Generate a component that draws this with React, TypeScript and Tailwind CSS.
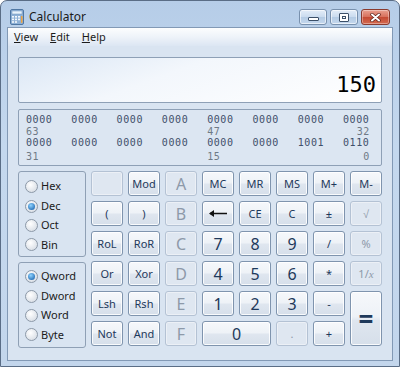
import React from "react";

const ui = "font-['Noto_Sans',sans-serif]";
const on =
  "border-[#7f94ae] bg-[linear-gradient(to_bottom,#f6f8fb_0%,#eef2f7_46%,#dfe6ef_54%,#d6dfea_100%)] text-[#1e395b] shadow-[inset_0_0_0_1px_rgba(255,255,255,0.85)]";
const off =
  "border-[#b4c2d4] bg-[#dfe7f1] text-[#8d99a9] shadow-[inset_0_0_0_1px_rgba(255,255,255,0.4)]";

type Key = { l: React.ReactNode; off?: boolean; size?: string; span?: string };

const Back = () => (
  <svg width="20" height="9" viewBox="0 0 20 9">
    <path d="M2 4.5 H19" stroke="#111" strokeWidth="1.6" />
    <path d="M1 4.5 L6 1 L6 8 Z" fill="#111" />
  </svg>
);

const keys: Key[] = [
  { l: "", off: true },
  { l: "Mod" },
  { l: "A", off: true, size: "text-[16px]" },
  { l: "MC" },
  { l: "MR" },
  { l: "MS" },
  { l: "M+" },
  { l: "M-" },
  { l: "(" },
  { l: ")" },
  { l: "B", off: true, size: "text-[16px]" },
  { l: <Back /> },
  { l: "CE" },
  { l: "C" },
  { l: "±" },
  { l: "√", off: true },
  { l: "RoL" },
  { l: "RoR" },
  { l: "C", off: true, size: "text-[16px]" },
  { l: "7", size: "text-[16px]" },
  { l: "8", size: "text-[16px]" },
  { l: "9", size: "text-[16px]" },
  { l: "/" },
  { l: "%", off: true },
  { l: "Or" },
  { l: "Xor" },
  { l: "D", off: true, size: "text-[16px]" },
  { l: "4", size: "text-[16px]" },
  { l: "5", size: "text-[16px]" },
  { l: "6", size: "text-[16px]" },
  { l: "*" },
  {
    l: (
      <span>
        1/<i className="font-['Liberation_Serif',serif]">x</i>
      </span>
    ),
    off: true,
  },
  { l: "Lsh" },
  { l: "Rsh" },
  { l: "E", off: true, size: "text-[16px]" },
  { l: "1", size: "text-[16px]" },
  { l: "2", size: "text-[16px]" },
  { l: "3", size: "text-[16px]" },
  { l: "-" },
  { l: "=", size: "text-[26px] font-bold", span: "row-span-2" },
  { l: "Not" },
  { l: "And" },
  { l: "F", off: true, size: "text-[16px]" },
  { l: "0", size: "text-[16px]", span: "col-span-2" },
  { l: ".", off: true },
  { l: "+" },
];

function Radio({ label, checked }: { label: string; checked?: boolean }) {
  return (
    <div className="flex h-[19.4px] items-center gap-[3px]">
      <span className="flex h-[13px] w-[13px] items-center justify-center rounded-full border border-[#8c99a8] bg-[radial-gradient(circle_at_40%_35%,#ffffff,#cfd6df)]">
        {checked && (
          <span className="h-[7px] w-[7px] rounded-full bg-[radial-gradient(circle_at_40%_35%,#8fd3ff,#0b55a3)]" />
        )}
      </span>
      <span className="text-[11px] text-[#1b1b1b]">{label}</span>
    </div>
  );
}

const bits = [
  ["0000", "0000", "0000", "0000", "0000", "0000", "0000", "0000"],
  ["0000", "0000", "0000", "0000", "0000", "0000", "1001", "0110"],
];

function BitRow({ row }: { row: string[] }) {
  return (
    <div className="flex h-[12px] justify-between leading-[12px] text-[#3f4f6a]">
      {row.map((b, i) => (
        <span key={i} className="w-[27px]">
          {b}
        </span>
      ))}
    </div>
  );
}

function LabelRow({ a, b, c }: { a: string; b: string; c: string }) {
  return (
    <div className="flex h-[12px] justify-between leading-[12px] text-[#6f7a86]">
      {[a, "", "", "", b, "", "", c].map((t, i) => (
        <span key={i} className={`w-[27px] ${i === 7 ? "text-right" : ""}`}>
          {t}
        </span>
      ))}
    </div>
  );
}

export default function App() {
  return (
    <div
      className={`${ui} flex h-[367px] w-[400px] flex-col overflow-hidden rounded-t-[7px] border border-[#5a6d86] bg-[linear-gradient(to_bottom,#b6cde8_0%,#c4d8ee_40%,#c3d6ec_100%)]`}
    >
      {/* Title bar */}
      <div className="flex h-[26px] shrink-0 items-start pt-[8px]">
        <svg width="16" height="16" viewBox="0 0 16 16" className="ml-[8px]">
          <rect x="1.5" y="0.5" width="13" height="15" rx="1.5" fill="#8fb1d6" stroke="#4f77a3" />
          <rect x="3" y="2" width="10" height="3" fill="#e9f3fc" stroke="#6f93bb" strokeWidth="0.5" />
          <g fill="#f4f8fc">
            <rect x="3" y="7" width="2" height="1.6" />
            <rect x="6" y="7" width="2" height="1.6" />
            <rect x="9" y="7" width="2" height="1.6" />
            <rect x="3" y="9.6" width="2" height="1.6" />
            <rect x="6" y="9.6" width="2" height="1.6" />
            <rect x="9" y="9.6" width="2" height="1.6" />
            <rect x="3" y="12.2" width="2" height="1.6" />
            <rect x="6" y="12.2" width="2" height="1.6" />
          </g>
          <rect x="12" y="7" width="1.5" height="6.8" fill="#f0a23c" />
        </svg>
        <span className="ml-[4px] mt-[1px] text-[12px] leading-[14px] text-[#1a1a1a]">Calculator</span>
        <div className="ml-auto mr-[9px] flex gap-[3px]">
          <div className="flex h-[16px] w-[28px] items-center justify-center rounded-[3px] border border-[#7890ad] bg-[linear-gradient(to_bottom,#e3edf8_0%,#cbdcef_48%,#b4cbe4_52%,#c5d8ee_100%)] shadow-[inset_0_0_0_1px_rgba(255,255,255,0.6)]">
            <span className="mt-[4px] h-[4px] w-[11px] rounded-[1px] border border-[#3b4f68] bg-white" />
          </div>
          <div className="flex h-[16px] w-[28px] items-center justify-center rounded-[3px] border border-[#7890ad] bg-[linear-gradient(to_bottom,#e3edf8_0%,#cbdcef_48%,#b4cbe4_52%,#c5d8ee_100%)] shadow-[inset_0_0_0_1px_rgba(255,255,255,0.6)]">
            <span className="flex h-[9px] w-[10px] items-center justify-center rounded-[1px] border border-[#3b4f68] bg-white">
              <span className="h-[3px] w-[4px] border border-[#3b4f68]" />
            </span>
          </div>
          <div className="flex h-[16px] w-[29px] items-center justify-center rounded-[3px] border border-[#8a3a2e] bg-[linear-gradient(to_bottom,#e9a08f_0%,#d7715d_48%,#c44a33_52%,#d46a50_100%)] shadow-[inset_0_0_0_1px_rgba(255,255,255,0.35)]">
            <svg width="11" height="9" viewBox="0 0 11 9">
              <path d="M2 1.5 L9 7.5 M9 1.5 L2 7.5" stroke="#5c2219" strokeWidth="3.4" strokeLinecap="round" />
              <path d="M2 1.5 L9 7.5 M9 1.5 L2 7.5" stroke="#ffffff" strokeWidth="2" strokeLinecap="round" />
            </svg>
          </div>
        </div>
      </div>

      {/* Client area */}
      <div className="mx-[6px] flex flex-1 flex-col border border-[#8299b5] bg-[#d9e4f1]">
        {/* Menu */}
        <div className="flex h-[18px] items-center gap-[12px] bg-[linear-gradient(to_bottom,#fcfdfe_0%,#eef3f9_50%,#dce6f3_100%)] pl-[6px] text-[11px] text-[#1b1b1b]">
          <span>
            <u>V</u>iew
          </span>
          <span>
            <u>E</u>dit
          </span>
          <span>
            <u>H</u>elp
          </span>
        </div>

        <div className="flex flex-col px-[10px] pt-[11px]">
          {/* Display */}
          <div className="flex h-[46px] items-end justify-end rounded-[2px] border border-[#8ea0b6] bg-[linear-gradient(160deg,#dbe7f5_0%,#f3f7fc_40%,#ffffff_100%)] pb-[6px] pr-[5px]">
            <span className="font-['DejaVu_Sans_Mono',monospace] text-[22px] leading-[22px] text-black">150</span>
          </div>

          {/* Binary */}
          <div className="mt-[6px] flex h-[57px] flex-col rounded-[2px] border border-[#8ea0b6] bg-[#dce6f2] pl-[7px] pr-[11px] pt-[4px] font-['DejaVu_Sans_Mono',monospace] text-[10px] tracking-[0.6px]">
            <BitRow row={bits[0]} />
            <LabelRow a="63" b="47" c="32" />
            <div className="mt-[-1px]">
              <BitRow row={bits[1]} />
            </div>
            <div className="mt-[2px]">
              <LabelRow a="31" b="15" c="0" />
            </div>
          </div>

          {/* Lower area */}
          <div className="mt-[5px] flex gap-[5px]">
            <div className="flex w-[69px] flex-col gap-[5px]">
              <div className="h-[86px] rounded-[3px] border border-[#8fa0b5] pl-[6px] pt-[5px]">
                <Radio label="Hex" />
                <Radio label="Dec" checked />
                <Radio label="Oct" />
                <Radio label="Bin" />
              </div>
              <div className="h-[86px] rounded-[3px] border border-[#8fa0b5] pl-[6px] pt-[4px]">
                <Radio label="Qword" checked />
                <Radio label="Dword" />
                <Radio label="Word" />
                <Radio label="Byte" />
              </div>
            </div>

            <div className="grid grid-cols-[repeat(8,32px)] grid-rows-[repeat(6,25px)] gap-[5px]">
              {keys.map((k, i) => (
                <div
                  key={i}
                  className={`flex items-center justify-center rounded-[3px] border leading-none ${k.off ? off : on} ${k.size ?? "text-[11px]"} ${k.span ?? ""}`}
                >
                  {k.l}
                </div>
              ))}
            </div>
          </div>
        </div>
      </div>
      <div className="h-[5px] shrink-0" />
    </div>
  );
}
